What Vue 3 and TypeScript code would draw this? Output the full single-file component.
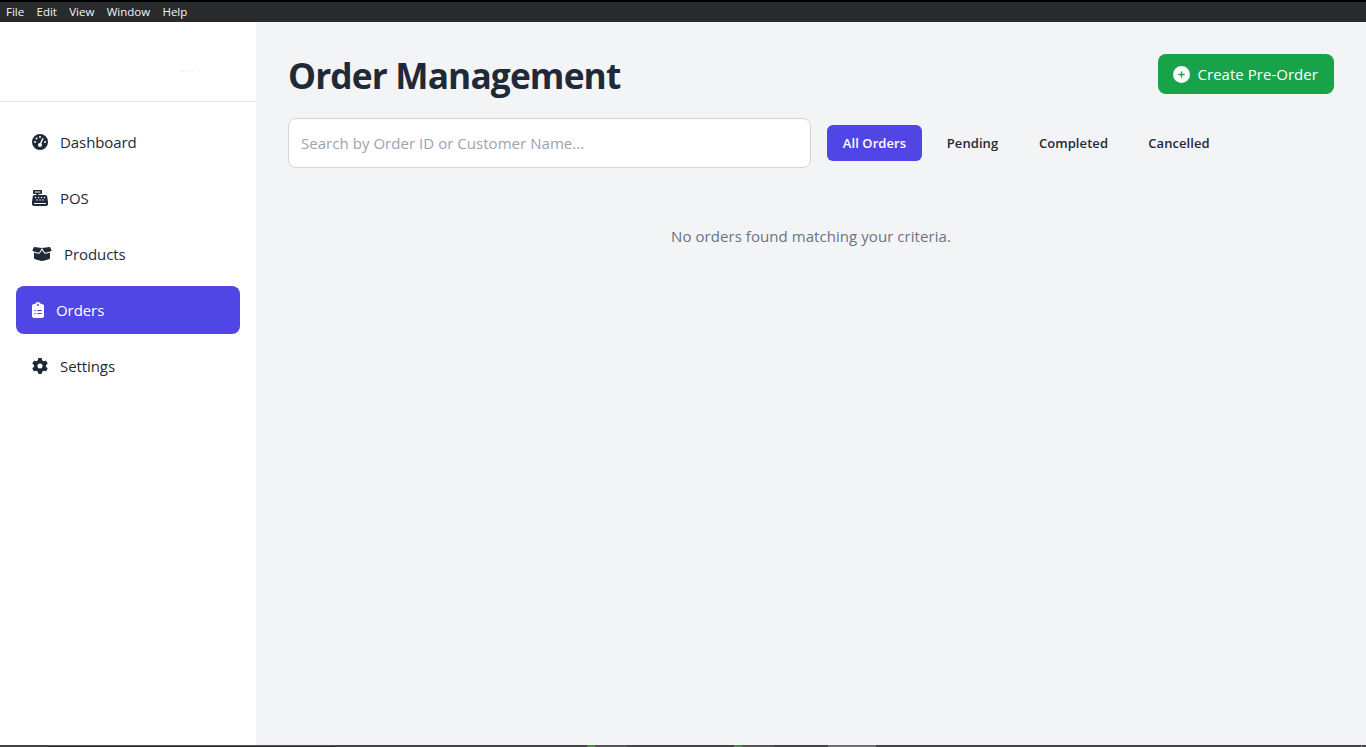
<script setup lang="ts">
import { ref } from 'vue'

interface NavItem {
  label: string
  key: string
  width: number
  viewBox: string
  path: string
}

const menus: string[] = ['File', 'Edit', 'View', 'Window', 'Help']

const navItems: NavItem[] = [
  {
    label: 'Dashboard',
    key: 'dashboard',
    width: 16,
    viewBox: '0 0 512 512',
    path: 'M0 256a256 256 0 1 1 512 0A256 256 0 1 1 0 256zM288 96a32 32 0 1 0 -64 0 32 32 0 1 0 64 0zM256 416c35.3 0 64-28.7 64-64c0-17.4-6.9-33.1-18.1-44.6L366 161.7c5.3-12.1-.2-26.3-12.3-31.6s-26.3 .2-31.6 12.3L257.9 288c-.6 0-1.3 0-1.9 0c-35.3 0-64 28.7-64 64s28.7 64 64 64zM176 144a32 32 0 1 0 -64 0 32 32 0 1 0 64 0zM96 288a32 32 0 1 0 0-64 32 32 0 1 0 0 64zm352-32a32 32 0 1 0 -64 0 32 32 0 1 0 64 0z',
  },
  {
    label: 'POS',
    key: 'pos',
    width: 16,
    viewBox: '0 0 512 512',
    path: 'M64 0C46.3 0 32 14.3 32 32l0 64c0 17.7 14.3 32 32 32l80 0 0 32-57 0c-31.6 0-58.5 23.1-63.3 54.4L1.1 364.1C.4 368.8 0 373.6 0 378.4L0 448c0 35.3 28.7 64 64 64l384 0c35.3 0 64-28.7 64-64l0-69.6c0-4.8-.4-9.6-1.1-14.4L488.2 214.4C483.5 183.1 456.6 160 425 160l-217 0 0-32 80 0c17.7 0 32-14.3 32-32l0-64c0-17.7-14.3-32-32-32L64 0zM96 48l160 0c8.8 0 16 7.2 16 16s-7.2 16-16 16L96 80c-8.8 0-16-7.2-16-16s7.2-16 16-16zM64 432c0-8.8 7.2-16 16-16l352 0c8.8 0 16 7.2 16 16s-7.2 16-16 16L80 448c-8.8 0-16-7.2-16-16zm48-168a24 24 0 1 1 0-48 24 24 0 1 1 0 48zm120-24a24 24 0 1 1 -48 0 24 24 0 1 1 48 0zM160 344a24 24 0 1 1 0-48 24 24 0 1 1 0 48zM328 240a24 24 0 1 1 -48 0 24 24 0 1 1 48 0zM256 344a24 24 0 1 1 0-48 24 24 0 1 1 0 48zM424 240a24 24 0 1 1 -48 0 24 24 0 1 1 48 0zM352 344a24 24 0 1 1 0-48 24 24 0 1 1 0 48z',
  },
  {
    label: 'Products',
    key: 'products',
    width: 20,
    viewBox: '0 0 640 512',
    path: 'M58.9 42.1c3-6.1 9.6-9.6 16.3-8.7L320 64 564.8 33.4c6.7-.8 13.3 2.7 16.3 8.7l41.7 83.4c9 17.9-.6 39.6-19.8 45.1L439.6 217.3c-13.9 4-28.8-1.9-36.2-14.3L320 64 236.6 203c-7.4 12.4-22.3 18.3-36.2 14.3L37.1 170.6c-19.3-5.5-28.8-27.2-19.8-45.1L58.9 42.1zM321.1 128l54.9 91.4c14.9 24.8 44.6 36.6 72.5 28.6L576 211.6l0 167c0 22-15 41.2-36.4 46.6l-204.1 51c-10.2 2.6-20.9 2.6-31 0l-204.1-51C79 419.7 64 400.5 64 378.5l0-167L191.6 248c27.8 8 57.6-3.8 72.5-28.6L318.9 128l2.2 0z',
  },
  {
    label: 'Orders',
    key: 'orders',
    width: 12,
    viewBox: '0 0 384 512',
    path: 'M192 0c-41.8 0-77.4 26.7-90.5 64L64 64C28.7 64 0 92.7 0 128L0 448c0 35.3 28.7 64 64 64l256 0c35.3 0 64-28.7 64-64l0-320c0-35.3-28.7-64-64-64l-37.5 0C269.4 26.7 233.8 0 192 0zm0 64a32 32 0 1 1 0 64 32 32 0 1 1 0-64zM72 272a24 24 0 1 1 48 0 24 24 0 1 1 -48 0zm104-16l128 0c8.8 0 16 7.2 16 16s-7.2 16-16 16l-128 0c-8.8 0-16-7.2-16-16s7.2-16 16-16zM72 368a24 24 0 1 1 48 0 24 24 0 1 1 -48 0zm88 0c0-8.8 7.2-16 16-16l128 0c8.8 0 16 7.2 16 16s-7.2 16-16 16l-128 0c-8.8 0-16-7.2-16-16z',
  },
  {
    label: 'Settings',
    key: 'settings',
    width: 16,
    viewBox: '0 0 512 512',
    path: 'M495.9 166.6c3.2 8.7 .5 18.4-6.4 24.6l-43.3 39.4c1.1 8.3 1.7 16.8 1.7 25.4s-.6 17.1-1.7 25.4l43.3 39.4c6.9 6.2 9.6 15.9 6.4 24.6c-4.4 11.9-9.7 23.3-15.8 34.3l-4.7 8.1c-6.6 11-14 21.4-22.1 31.2c-5.9 7.2-15.7 9.6-24.5 6.8l-55.7-17.7c-13.4 10.3-28.2 18.9-44 25.4l-12.5 57.1c-2 9.1-9 16.3-18.2 17.8c-13.8 2.3-28 3.5-42.5 3.5s-28.7-1.2-42.5-3.5c-9.2-1.5-16.2-8.7-18.2-17.8l-12.5-57.1c-15.8-6.5-30.6-15.1-44-25.4L83.1 425.9c-8.8 2.8-18.6 .3-24.5-6.8c-8.1-9.8-15.5-20.2-22.1-31.2l-4.7-8.1c-6.1-11-11.4-22.4-15.8-34.3c-3.2-8.7-.5-18.4 6.4-24.6l43.3-39.4C64.6 273.1 64 264.6 64 256s.6-17.1 1.7-25.4L22.4 191.2c-6.9-6.2-9.6-15.9-6.4-24.6c4.4-11.9 9.7-23.3 15.8-34.3l4.7-8.1c6.6-11 14-21.4 22.1-31.2c5.9-7.2 15.7-9.6 24.5-6.8l55.7 17.7c13.4-10.3 28.2-18.9 44-25.4l12.5-57.1c2-9.1 9-16.3 18.2-17.8C227.3 1.2 241.5 0 256 0s28.7 1.2 42.5 3.5c9.2 1.5 16.2 8.7 18.2 17.8l12.5 57.1c15.8 6.5 30.6 15.1 44 25.4l55.7-17.7c8.8-2.8 18.6-.3 24.5 6.8c8.1 9.8 15.5 20.2 22.1 31.2l4.7 8.1c6.1 11 11.4 22.4 15.8 34.3zM256 336a80 80 0 1 0 0-160 80 80 0 1 0 0 160z',
  },
]

const filters: string[] = ['All Orders', 'Pending', 'Completed', 'Cancelled']

const activeNav = ref('orders')
const activeFilter = ref('All Orders')
const search = ref('')
</script>

<template>
  <div class="window">
    <header class="menubar">
      <span v-for="m in menus" :key="m" class="menu">{{ m }}</span>
    </header>

    <div class="body">
      <aside class="sidebar">
        <div class="brand"><i class="dash"></i><i class="dash"></i><i class="dash faint"></i></div>
        <nav class="nav">
          <a
            v-for="item in navItems"
            :key="item.key"
            class="nav-item"
            :class="{ active: item.key === activeNav }"
            @click="activeNav = item.key"
          >
            <svg :width="item.width" height="16" :viewBox="item.viewBox" fill="currentColor"><path :d="item.path" /></svg>
            <span class="nav-label">{{ item.label }}</span>
          </a>
        </nav>
      </aside>

      <main class="content">
        <div class="heading">
          <h1>Order Management</h1>
          <button class="create">
            <svg width="17" height="17" viewBox="0 0 512 512" fill="currentColor">
              <path d="M256 512A256 256 0 1 0 256 0a256 256 0 1 0 0 512zM236 336l0-60-60 0c-11 0-20-9-20-20s9-20 20-20l60 0 0-60c0-11 9-20 20-20s20 9 20 20l0 60 60 0c11 0 20 9 20 20s-9 20-20 20l-60 0 0 60c0 11-9 20-20 20s-20-9-20-20z" />
            </svg>
            <span>Create Pre-Order</span>
          </button>
        </div>

        <div class="toolbar">
          <input v-model="search" class="search" type="text" placeholder="Search by Order ID or Customer Name..." />
          <div class="filters">
            <button
              v-for="f in filters"
              :key="f"
              class="filter"
              :class="['filter-' + f.toLowerCase().replace(' ', '-'), { selected: f === activeFilter }]"
              @click="activeFilter = f"
            >{{ f }}</button>
          </div>
        </div>

        <p class="empty">No orders found matching your criteria.</p>
      </main>
    </div>

    <footer class="taskbar">
      <i class="seg lead"></i><i class="seg field"></i><i class="seg gap-a"></i>
      <i class="seg green"></i><i class="seg app"></i><i class="seg gap-b"></i>
      <i class="seg green"></i><i class="seg app"></i><i class="seg gap-c"></i>
      <i class="seg current"></i><i class="seg rest"></i><i class="seg tick"></i>
    </footer>
  </div>
</template>

<style>
body {
  margin: 0;
  overflow: hidden;
}
</style>

<style scoped>
.window {
  display: flex;
  flex-direction: column;
  width: 100%;
  height: 100vh;
  font-family: 'Open Sans', 'Noto Sans', sans-serif;
  color: #1f2937;
  background: #f3f4f6;
}
.window * {
  box-sizing: border-box;
}
button,
input {
  font-family: inherit;
}
.menubar {
  flex: none;
  display: flex;
  align-items: center;
  gap: 12.3px;
  height: 22px;
  padding: 0 0 2px 6px;
  border-top: 2px solid #000;
  background: #292a2c;
  color: #f5f5f5;
  font-size: 11.5px;
  white-space: nowrap;
}
.body {
  flex: 1;
  display: flex;
  min-height: 0;
}
.sidebar {
  flex: none;
  width: 256px;
  background: #fff;
}
.brand {
  display: flex;
  gap: 4px;
  height: 80px;
  padding: 49px 0 0 181px;
  border-bottom: 1px solid #e5e7eb;
}
.dash {
  width: 4px;
  height: 1px;
  background: #eef0f6;
}
.faint {
  background: #f4f5f9;
}
.nav {
  display: flex;
  flex-direction: column;
  gap: 8px;
  padding: 16px;
}
.nav-item {
  display: flex;
  align-items: center;
  gap: 12px;
  height: 48px;
  padding: 0 16px;
  border-radius: 8px;
  font-size: 15px;
  letter-spacing: -0.08px;
  cursor: pointer;
}
.nav-item.active {
  background: #4f46e5;
  color: #fff;
}
.content {
  flex: 1;
  padding: 32px;
}
.heading {
  display: flex;
  align-items: center;
  justify-content: space-between;
  height: 40px;
}
h1 {
  margin: 2px 0 0;
  font-size: 35.3px;
  line-height: 40px;
  font-weight: 700;
  letter-spacing: -0.88px;
  white-space: nowrap;
}
.create {
  display: flex;
  align-items: center;
  gap: 7.5px;
  width: 176px;
  height: 40px;
  padding: 0 0 0 15px;
  border: 0;
  border-radius: 8px;
  background: #16a34a;
  color: #fff;
  font-size: 15px;
  letter-spacing: 0.03px;
  white-space: nowrap;
}
.toolbar {
  display: flex;
  align-items: center;
  gap: 16px;
  margin-top: 24px;
}
.search {
  width: 523px;
  height: 50px;
  padding: 0 12px;
  border: 1px solid #d1d5db;
  border-radius: 8px;
  background: #fff;
  color: #1f2937;
  font-size: 15px;
  letter-spacing: 0.04px;
  outline: none;
}
.search::placeholder {
  color: #9ca3af;
  opacity: 1;
}
.filters {
  display: flex;
  gap: 8px;
}
.filter {
  height: 36px;
  padding: 0;
  border: 0;
  border-radius: 6px;
  background: transparent;
  color: #1f2937;
  font-size: 13px;
  font-weight: 600;
  letter-spacing: 0.08px;
  text-align: center;
  white-space: nowrap;
}
.filter.selected {
  background: #4f46e5;
  color: #fff;
}
.filter-all-orders {
  width: 95px;
}
.filter-pending {
  width: 85px;
}
.filter-completed {
  width: 101px;
}
.filter-cancelled {
  width: 94px;
}
.empty {
  margin: 56px 0 0;
  color: #6b7280;
  font-size: 15px;
  line-height: 24px;
  letter-spacing: 0.06px;
  text-align: center;
}
.taskbar {
  flex: none;
  display: flex;
  height: 2px;
  background: #454345;
}
.seg {
  flex: none;
  height: 2px;
}
.lead {
  width: 48px;
}
.field {
  width: 287px;
  border-top: 1px solid #565456;
  background: #2e2a2d;
}
.gap-a {
  width: 252px;
}
.green {
  width: 8px;
  background: #568050;
}
.app {
  width: 32px;
  background: #565457;
}
.gap-b {
  width: 107px;
}
.gap-c {
  width: 54px;
}
.current {
  width: 48px;
  background: #706e70;
}
.rest {
  width: 485px;
}
.tick {
  width: 1px;
  background: #8a888a;
}
</style>
